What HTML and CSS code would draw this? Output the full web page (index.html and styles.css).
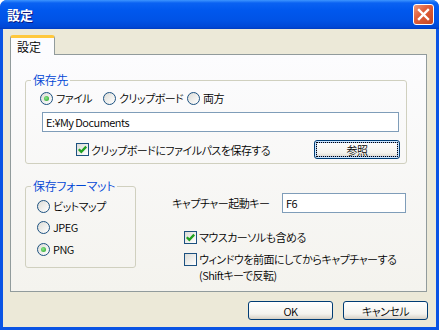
FILE: index.html
```html
<!DOCTYPE html>
<html lang="ja">
<head>
    <meta charset="UTF-8">
    <meta name="viewport" content="width=device-width, initial-scale=1.0">
    <title>設定</title>
    <link rel="stylesheet" href="styles.css">
</head>
<body>
    <div class="window">
        <div class="titlebar">
            <span class="title">設定</span>
            <span class="close">
                <svg width="13" height="13" viewBox="0 0 13 13">
                    <path d="M2 2 L11 11 M11 2 L2 11" stroke="#fff" stroke-width="2.4" stroke-linecap="square"/>
                </svg>
            </span>
        </div>

        <div class="client">
            <div class="tabs">
                <div class="tab active">設定</div>
            </div>

            <div class="panel">
                <!-- 保存先 -->
                <fieldset class="group group-dest">
                    <legend>保存先</legend>
                    <div class="row dest-opts">
                        <label class="opt opt-file"><span class="radio on"></span>ファイル</label>
                        <label class="opt opt-clip"><span class="radio"></span>クリップボード</label>
                        <label class="opt"><span class="radio"></span>両方</label>
                    </div>
                    <input class="field path" type="text" value="E:¥My Documents">
                    <div class="row save-row">
                        <label class="check-label">
                            <span class="check">
                                <svg width="11" height="11" viewBox="0 0 11 11"><path d="M1.8 5.2 L4.3 7.8 L9.2 2.6" fill="none" stroke="#21a121" stroke-width="2.3"/></svg>
                            </span>クリップボードにファイルパスを保存する
                        </label>
                        <button class="btn default">参照</button>
                    </div>
                </fieldset>

                <div class="lower">
                    <!-- 保存フォーマット -->
                    <fieldset class="group group-format">
                        <legend>保存フォーマット</legend>
                        <label class="row fmt"><span class="radio"></span>ビットマップ</label>
                        <label class="row fmt"><span class="radio"></span>JPEG</label>
                        <label class="row fmt fmt-last"><span class="radio on"></span>PNG</label>
                    </fieldset>

                    <div class="options">
                        <div class="row key-row">
                            <span>キャプチャー起動キー</span>
                            <input class="field key" type="text" value="F6">
                        </div>
                        <label class="row check-label mouse">
                            <span class="check">
                                <svg width="11" height="11" viewBox="0 0 11 11"><path d="M1.8 5.2 L4.3 7.8 L9.2 2.6" fill="none" stroke="#21a121" stroke-width="2.3"/></svg>
                            </span>マウスカーソルも含める
                        </label>
                        <label class="check-label front">
                            <span class="check empty"></span>
                            <span class="two-line">ウィンドウを前面にしてからキャプチャーする<br>(Shiftキーで反転)</span>
                        </label>
                    </div>
                </div>
            </div>

            <div class="buttons">
                <button class="btn">OK</button>
                <button class="btn">キャンセル</button>
            </div>
        </div>
    </div>
</body>
</html>
```

FILE: styles.css
```css
* {
    margin: 0;
    padding: 0;
    box-sizing: border-box;
}

body {
    font-family: "Noto Sans CJK JP", "Liberation Sans", sans-serif;
    font-size: 11px;
    font-weight: 350;
    letter-spacing: -0.5px;
    font-feature-settings: "palt" 1;
    white-space: nowrap;
    color: #000;
    background: #fff;
}

.window {
    width: 439px;
    height: 330px;
    display: flex;
    flex-direction: column;
    background: #0a54e4;
    border-radius: 7px 7px 0 0;
    overflow: hidden;
}

.titlebar {
    height: 29px;
    display: flex;
    align-items: center;
    padding: 0 5px 0 7px;
    background: linear-gradient(to bottom, #3d95ff 0px, #0a62f2 3px, #0058ee 10px, #0053e6 20px, #0048d6 27px, #003cc0 29px);
}

.title {
    flex: 1;
    color: #fff;
    font-weight: bold;
    font-size: 13px;
    letter-spacing: 0;
    text-shadow: 1px 1px 0 #0a1883;
}

.close {
    width: 21px;
    height: 21px;
    display: flex;
    align-items: center;
    justify-content: center;
    border: 1px solid #fff;
    border-radius: 3px;
    background: linear-gradient(135deg, #f09a7c 0%, #e0603c 40%, #c84420 100%);
}

.client {
    flex: 1;
    margin: 0 3px 3px;
    background: #ece9d8;
    padding: 6px 0 0 7px;
}

/* タブ */
.tabs {
    display: flex;
}

.tab {
    width: 45px;
    height: 20px;
    margin-bottom: -1px;
    padding: 0 6px;
    line-height: 17px;
    font-size: 12px;
    letter-spacing: 0;
    border: 1px solid #919b9c;
    border-top: 3px solid #ffc83c;
    border-bottom: none;
    border-radius: 3px 3px 0 0;
    background: #fcfcfe;
    position: relative;
    z-index: 1;
}

.panel {
    height: 238px;
    margin-right: 9px;
    border: 1px solid #919b9c;
    background: linear-gradient(to bottom, #fcfcfe, #f4f3ee);
    padding: 18px 19px 0 14px;
}

/* グループ枠 */
.group {
    border: 1px solid #d0d0bf;
    border-radius: 3px;
    min-width: 0;
}

.group legend {
    margin-left: 5px;
    padding: 0 2px;
    line-height: 14px;
    font-size: 12px;
    letter-spacing: -0.3px;
    color: #0046d5;
}

.row {
    display: flex;
    align-items: center;
    height: 16px;
}

.dest-opts {
    margin-top: 3px;
    padding-left: 14px;
}

.opt {
    display: flex;
    align-items: center;
    gap: 3px;
}

.opt-file {
    width: 63px;
}

.opt-clip {
    width: 84px;
}

.field {
    display: block;
    height: 20px;
    border: 1px solid #7f9db9;
    background: #fff;
    font: inherit;
    letter-spacing: inherit;
    font-feature-settings: "palt" 1;
    padding: 0 3px;
    color: #000;
}

.path {
    width: 357px;
    margin: 6px 0 0 16px;
}

.save-row {
    height: 19px;
    margin-top: 8px;
    padding-left: 50px;
    padding-right: 6px;
    margin-bottom: 4px;
}

.check-label {
    display: flex;
    align-items: center;
    gap: 2px;
}

.radio {
    width: 13px;
    height: 13px;
    flex-shrink: 0;
    border: 1px solid #1c5180;
    border-radius: 50%;
    background: linear-gradient(135deg, #dcdcd7, #fff);
    display: flex;
    align-items: center;
    justify-content: center;
}

.radio.on::after {
    content: "";
    width: 5px;
    height: 5px;
    border-radius: 50%;
    background: radial-gradient(circle at 40% 40%, #8ce68c, #21a121);
}

.check {
    width: 13px;
    height: 13px;
    flex-shrink: 0;
    border: 1px solid #1c5180;
    background: linear-gradient(135deg, #dcdcd7, #fff);
    display: flex;
    align-items: center;
    justify-content: center;
}

/* ボタン */
.btn {
    width: 86px;
    height: 19px;
    font: inherit;
    letter-spacing: inherit;
    font-feature-settings: "palt" 1;
    color: #000;
    border: 1px solid #003c74;
    border-radius: 3px;
    background: linear-gradient(to bottom, #fff 0%, #f4f3ee 70%, #d6d0c5 100%);
}

.save-row .btn {
    margin-left: auto;
}

.btn.default {
    box-shadow: inset 0 0 0 1px #cee7ff, inset 0 0 0 2px #98b8ea;
    outline: 1px dotted #000;
    outline-offset: -3px;
}

.lower {
    display: flex;
    align-items: flex-start;
    margin-top: 15px;
}

.group-format {
    width: 111px;
    padding-bottom: 10px;
}

.fmt {
    gap: 3px;
    padding-left: 11px;
    margin-top: 5px;
}

.fmt-last {
    margin-top: 6px;
}

.options {
    width: 234px;
    margin-left: 36px;
    padding-top: 14px;
}

.key-row {
    height: 20px;
}

.key {
    width: 124px;
    margin-left: auto;
}

.mouse {
    margin-top: 16px;
    padding-left: 12px;
}

.front {
    margin-top: 7px;
    padding-left: 12px;
    align-items: flex-start;
}

.front .check {
    margin-top: 1px;
}

.two-line {
    line-height: 16px;
    margin-top: -1px;
}

.buttons {
    display: flex;
    justify-content: flex-end;
    gap: 10px;
    padding-right: 8px;
    margin-top: 9px;
}

.buttons .btn {
    width: 85px;
}
```
